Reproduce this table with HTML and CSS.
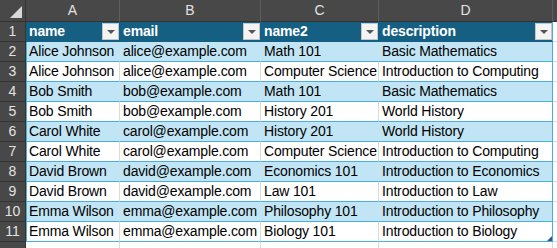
FILE: index.html
```html
<!DOCTYPE html>
<html>
<head>
<meta charset="utf-8">
<link rel="stylesheet" href="styles.css">
</head>
<body>
<div class="sheet">
  <div class="row colhdr">
    <div class="corner"><span class="corner-tri"></span></div>
    <div class="ch">A</div>
    <div class="ch">B</div>
    <div class="ch">C</div>
    <div class="ch">D</div>
    <div class="ch rest"></div>
  </div>
  <div class="row thead">
    <div class="rh">1</div>
    <div class="c first"><span>name</span><i class="dd"></i></div>
    <div class="c"><span>email</span><i class="dd"></i></div>
    <div class="c"><span>name2</span><i class="dd"></i></div>
    <div class="c last"><span>description</span><i class="dd"></i></div>
    <div class="c out"></div>
  </div>
  <div class="row band">
    <div class="rh">2</div>
    <div class="c first">Alice Johnson</div><div class="c">alice@example.com</div><div class="c">Math 101</div><div class="c last">Basic Mathematics</div><div class="c out"></div>
  </div>
  <div class="row">
    <div class="rh">3</div>
    <div class="c first">Alice Johnson</div><div class="c">alice@example.com</div><div class="c">Computer Science</div><div class="c last">Introduction to Computing</div><div class="c out"></div>
  </div>
  <div class="row band">
    <div class="rh">4</div>
    <div class="c first">Bob Smith</div><div class="c">bob@example.com</div><div class="c">Math 101</div><div class="c last">Basic Mathematics</div><div class="c out"></div>
  </div>
  <div class="row">
    <div class="rh">5</div>
    <div class="c first">Bob Smith</div><div class="c">bob@example.com</div><div class="c">History 201</div><div class="c last">World History</div><div class="c out"></div>
  </div>
  <div class="row band">
    <div class="rh">6</div>
    <div class="c first">Carol White</div><div class="c">carol@example.com</div><div class="c">History 201</div><div class="c last">World History</div><div class="c out"></div>
  </div>
  <div class="row">
    <div class="rh">7</div>
    <div class="c first">Carol White</div><div class="c">carol@example.com</div><div class="c">Computer Science</div><div class="c last">Introduction to Computing</div><div class="c out"></div>
  </div>
  <div class="row band">
    <div class="rh">8</div>
    <div class="c first">David Brown</div><div class="c">david@example.com</div><div class="c">Economics 101</div><div class="c last">Introduction to Economics</div><div class="c out"></div>
  </div>
  <div class="row">
    <div class="rh">9</div>
    <div class="c first">David Brown</div><div class="c">david@example.com</div><div class="c">Law 101</div><div class="c last">Introduction to Law</div><div class="c out"></div>
  </div>
  <div class="row band">
    <div class="rh">10</div>
    <div class="c first">Emma Wilson</div><div class="c">emma@example.com</div><div class="c">Philosophy 101</div><div class="c last">Introduction to Philosophy</div><div class="c out"></div>
  </div>
  <div class="row">
    <div class="rh">11</div>
    <div class="c first">Emma Wilson</div><div class="c">emma@example.com</div><div class="c">Biology 101</div><div class="c last corner-cell">Introduction to Biology<i class="resize"></i></div><div class="c out"></div>
  </div>
  <div class="row empty">
    <div class="rh"></div>
    <div class="c"></div><div class="c"></div><div class="c"></div><div class="c"></div><div class="c out"></div>
  </div>
</div>
</body>
</html>
```
FILE: styles.css
```css
html, body {
  margin: 0;
  padding: 0;
  background: #ffffff;
}
.sheet {
  width: 557px;
  height: 248px;
  overflow: hidden;
  font-family: "Liberation Sans", Arial, sans-serif;
  font-size: 14px;
  letter-spacing: -0.15px;
  color: #000;
}
.row {
  display: grid;
  grid-template-columns: 26px 94px 141px 118px 174px 1fr;
  height: 20px;
}
.row > div {
  box-sizing: border-box;
  height: 20px;
  line-height: 19px;
  white-space: nowrap;
  overflow: hidden;
}
.colhdr {
  height: 22px;
}
.colhdr > div {
  height: 22px;
  line-height: 21px;
  background: #484848;
  border-bottom: 1px solid #333333;
  border-right: 1px solid #5e5e5e;
  color: #e2e2e2;
  text-align: center;
  letter-spacing: 0;
}
.colhdr .corner {
  position: relative;
  border-right: 1px solid #333333;
}
.corner-tri {
  position: absolute;
  right: 3px;
  bottom: 3px;
  width: 0;
  height: 0;
  border-left: 12px solid transparent;
  border-bottom: 12px solid #d8d8d8;
}
.colhdr .rest {
  border-right: none;
}
.rh {
  background: #484848;
  color: #e2e2e2;
  text-align: center;
  letter-spacing: 0;
  border-right: 1px solid #333333;
  border-bottom: 1px solid #333333;
}
.c {
  padding-left: 3px;
  border-right: 1px solid #dadada;
  border-bottom: 1px solid #46b1e1;
}
.c.first {
  border-left: 1px solid #46b1e1;
  padding-left: 2px;
}
.c.last {
  border-right: 1px solid #46b1e1;
}
.c.out {
  border-right: none;
  border-bottom: 1px solid #dadada;
}
.band .c {
  background: #c1e5f5;
  border-right-color: #c1e5f5;
}
.band .c.last {
  border-right-color: #46b1e1;
}
.band .c.out {
  background: #fff;
}
.thead .c {
  background: #156082;
  color: #fff;
  font-weight: bold;
  border-right-color: #156082;
  border-bottom-color: #156082;
  display: flex;
  align-items: center;
  justify-content: space-between;
  padding-right: 0;
}
.thead .c.first {
  border-left-color: #156082;
}
.thead .c.last {
  border-right-color: #46b1e1;
}
.thead .c.out {
  background: #fff;
  border-bottom-color: #dadada;
}
.dd {
  flex: none;
  width: 17px;
  height: 17px;
  box-sizing: border-box;
  background: #f4f4f4;
  border: 1px solid #c6c6c6;
  display: flex;
  align-items: center;
  justify-content: center;
}
.dd::after {
  content: "";
  width: 0;
  height: 0;
  border-left: 4px solid transparent;
  border-right: 4px solid transparent;
  border-top: 4px solid #555;
}
.corner-cell {
  position: relative;
}
.resize {
  position: absolute;
  right: 0;
  bottom: 0;
  width: 0;
  height: 0;
  border-left: 5px solid transparent;
  border-bottom: 5px solid #2b5797;
}
.empty .c {
  border-bottom: none;
  border-right-color: #dadada;
}
.empty .c.out {
  border-right: none;
}
```
